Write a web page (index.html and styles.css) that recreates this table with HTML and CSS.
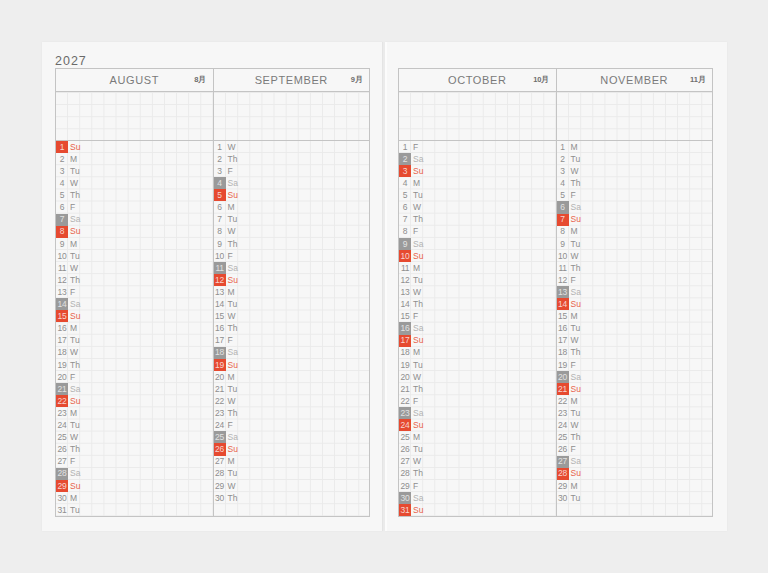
FILE: index.html
```html
<!DOCTYPE html>
<html lang="en">
<head>
<meta charset="utf-8">
<title>2027 Planner</title>
<link rel="stylesheet" href="styles.css">
</head>
<body>
<div class="spread">
  <section class="page page-left">
    <div class="year">2027</div>
    <div class="table">
      <div class="month">
        <div class="mhead"><span></span><span class="mname">AUGUST</span><span class="mnum">8月</span></div>
        <div class="notes"></div>
        <div class="days">
          <div class="d sun"><b>1</b><i>Su</i></div>
          <div class="d"><b>2</b><i>M</i></div>
          <div class="d"><b>3</b><i>Tu</i></div>
          <div class="d"><b>4</b><i>W</i></div>
          <div class="d"><b>5</b><i>Th</i></div>
          <div class="d"><b>6</b><i>F</i></div>
          <div class="d sat"><b>7</b><i>Sa</i></div>
          <div class="d sun"><b>8</b><i>Su</i></div>
          <div class="d"><b>9</b><i>M</i></div>
          <div class="d"><b>10</b><i>Tu</i></div>
          <div class="d"><b>11</b><i>W</i></div>
          <div class="d"><b>12</b><i>Th</i></div>
          <div class="d"><b>13</b><i>F</i></div>
          <div class="d sat"><b>14</b><i>Sa</i></div>
          <div class="d sun"><b>15</b><i>Su</i></div>
          <div class="d"><b>16</b><i>M</i></div>
          <div class="d"><b>17</b><i>Tu</i></div>
          <div class="d"><b>18</b><i>W</i></div>
          <div class="d"><b>19</b><i>Th</i></div>
          <div class="d"><b>20</b><i>F</i></div>
          <div class="d sat"><b>21</b><i>Sa</i></div>
          <div class="d sun"><b>22</b><i>Su</i></div>
          <div class="d"><b>23</b><i>M</i></div>
          <div class="d"><b>24</b><i>Tu</i></div>
          <div class="d"><b>25</b><i>W</i></div>
          <div class="d"><b>26</b><i>Th</i></div>
          <div class="d"><b>27</b><i>F</i></div>
          <div class="d sat"><b>28</b><i>Sa</i></div>
          <div class="d sun"><b>29</b><i>Su</i></div>
          <div class="d"><b>30</b><i>M</i></div>
          <div class="d"><b>31</b><i>Tu</i></div>
        </div>
      </div>
      <div class="month">
        <div class="mhead"><span></span><span class="mname">SEPTEMBER</span><span class="mnum">9月</span></div>
        <div class="notes"></div>
        <div class="days">
          <div class="d"><b>1</b><i>W</i></div>
          <div class="d"><b>2</b><i>Th</i></div>
          <div class="d"><b>3</b><i>F</i></div>
          <div class="d sat"><b>4</b><i>Sa</i></div>
          <div class="d sun"><b>5</b><i>Su</i></div>
          <div class="d"><b>6</b><i>M</i></div>
          <div class="d"><b>7</b><i>Tu</i></div>
          <div class="d"><b>8</b><i>W</i></div>
          <div class="d"><b>9</b><i>Th</i></div>
          <div class="d"><b>10</b><i>F</i></div>
          <div class="d sat"><b>11</b><i>Sa</i></div>
          <div class="d sun"><b>12</b><i>Su</i></div>
          <div class="d"><b>13</b><i>M</i></div>
          <div class="d"><b>14</b><i>Tu</i></div>
          <div class="d"><b>15</b><i>W</i></div>
          <div class="d"><b>16</b><i>Th</i></div>
          <div class="d"><b>17</b><i>F</i></div>
          <div class="d sat"><b>18</b><i>Sa</i></div>
          <div class="d sun"><b>19</b><i>Su</i></div>
          <div class="d"><b>20</b><i>M</i></div>
          <div class="d"><b>21</b><i>Tu</i></div>
          <div class="d"><b>22</b><i>W</i></div>
          <div class="d"><b>23</b><i>Th</i></div>
          <div class="d"><b>24</b><i>F</i></div>
          <div class="d sat"><b>25</b><i>Sa</i></div>
          <div class="d sun"><b>26</b><i>Su</i></div>
          <div class="d"><b>27</b><i>M</i></div>
          <div class="d"><b>28</b><i>Tu</i></div>
          <div class="d"><b>29</b><i>W</i></div>
          <div class="d"><b>30</b><i>Th</i></div>
          <div class="d"></div>
        </div>
      </div>
    </div>
  </section>
  <section class="page page-right">
    <div class="table">
      <div class="month">
        <div class="mhead"><span></span><span class="mname">OCTOBER</span><span class="mnum">10月</span></div>
        <div class="notes"></div>
        <div class="days">
          <div class="d"><b>1</b><i>F</i></div>
          <div class="d sat"><b>2</b><i>Sa</i></div>
          <div class="d sun"><b>3</b><i>Su</i></div>
          <div class="d"><b>4</b><i>M</i></div>
          <div class="d"><b>5</b><i>Tu</i></div>
          <div class="d"><b>6</b><i>W</i></div>
          <div class="d"><b>7</b><i>Th</i></div>
          <div class="d"><b>8</b><i>F</i></div>
          <div class="d sat"><b>9</b><i>Sa</i></div>
          <div class="d sun"><b>10</b><i>Su</i></div>
          <div class="d"><b>11</b><i>M</i></div>
          <div class="d"><b>12</b><i>Tu</i></div>
          <div class="d"><b>13</b><i>W</i></div>
          <div class="d"><b>14</b><i>Th</i></div>
          <div class="d"><b>15</b><i>F</i></div>
          <div class="d sat"><b>16</b><i>Sa</i></div>
          <div class="d sun"><b>17</b><i>Su</i></div>
          <div class="d"><b>18</b><i>M</i></div>
          <div class="d"><b>19</b><i>Tu</i></div>
          <div class="d"><b>20</b><i>W</i></div>
          <div class="d"><b>21</b><i>Th</i></div>
          <div class="d"><b>22</b><i>F</i></div>
          <div class="d sat"><b>23</b><i>Sa</i></div>
          <div class="d sun"><b>24</b><i>Su</i></div>
          <div class="d"><b>25</b><i>M</i></div>
          <div class="d"><b>26</b><i>Tu</i></div>
          <div class="d"><b>27</b><i>W</i></div>
          <div class="d"><b>28</b><i>Th</i></div>
          <div class="d"><b>29</b><i>F</i></div>
          <div class="d sat"><b>30</b><i>Sa</i></div>
          <div class="d sun"><b>31</b><i>Su</i></div>
        </div>
      </div>
      <div class="month">
        <div class="mhead"><span></span><span class="mname">NOVEMBER</span><span class="mnum">11月</span></div>
        <div class="notes"></div>
        <div class="days">
          <div class="d"><b>1</b><i>M</i></div>
          <div class="d"><b>2</b><i>Tu</i></div>
          <div class="d"><b>3</b><i>W</i></div>
          <div class="d"><b>4</b><i>Th</i></div>
          <div class="d"><b>5</b><i>F</i></div>
          <div class="d sat"><b>6</b><i>Sa</i></div>
          <div class="d sun"><b>7</b><i>Su</i></div>
          <div class="d"><b>8</b><i>M</i></div>
          <div class="d"><b>9</b><i>Tu</i></div>
          <div class="d"><b>10</b><i>W</i></div>
          <div class="d"><b>11</b><i>Th</i></div>
          <div class="d"><b>12</b><i>F</i></div>
          <div class="d sat"><b>13</b><i>Sa</i></div>
          <div class="d sun"><b>14</b><i>Su</i></div>
          <div class="d"><b>15</b><i>M</i></div>
          <div class="d"><b>16</b><i>Tu</i></div>
          <div class="d"><b>17</b><i>W</i></div>
          <div class="d"><b>18</b><i>Th</i></div>
          <div class="d"><b>19</b><i>F</i></div>
          <div class="d sat"><b>20</b><i>Sa</i></div>
          <div class="d sun"><b>21</b><i>Su</i></div>
          <div class="d"><b>22</b><i>M</i></div>
          <div class="d"><b>23</b><i>Tu</i></div>
          <div class="d"><b>24</b><i>W</i></div>
          <div class="d"><b>25</b><i>Th</i></div>
          <div class="d"><b>26</b><i>F</i></div>
          <div class="d sat"><b>27</b><i>Sa</i></div>
          <div class="d sun"><b>28</b><i>Su</i></div>
          <div class="d"><b>29</b><i>M</i></div>
          <div class="d"><b>30</b><i>Tu</i></div>
          <div class="d"></div>
        </div>
      </div>
    </div>
  </section>
</div>
</body>
</html>
```

FILE: styles.css
```css
:root {
  --u: 12.115px;
  --line: #c4c4c4;
  --grid: #eaeaea;
  --red: #e64a30;
  --gray: #9a9a9a;
}

* { box-sizing: border-box; }

html, body {
  margin: 0;
  padding: 0;
  background: #eeeeee;
  width: 768px;
  height: 573px;
  overflow: hidden;
  font-family: "Liberation Sans", Arial, sans-serif;
}

.spread {
  display: flex;
  gap: 2px;
  padding: 42px 0 0 42px;
}

.page {
  width: 341px;
  height: 489px;
  background: #f7f7f7;
  box-shadow: 0 0 2px rgba(0, 0, 0, 0.04);
}

.page-left {
  padding: 12px 13px 0 13px;
  border-right: 1px solid #e4e4e4;
}

.page-right {
  width: 342px;
  padding: 26px 14px 0 11px;
  border-left: 2px solid #fcfcfc;
}

.year {
  height: 14px;
  font-size: 12.5px;
  line-height: 14px;
  letter-spacing: 1px;
  color: #6a6a6a;
}

.table {
  width: 315px;
  height: 449px;
  display: grid;
  grid-template-columns: 1fr 1fr;
  border: 1px solid var(--line);
}

.month {
  display: grid;
  grid-template-rows: 23px 48px 1fr;
  min-width: 0;
}

.month + .month {
  border-left: 1px solid var(--line);
}

.mhead {
  display: grid;
  grid-template-columns: 1fr auto 1fr;
  align-items: center;
  border-bottom: 1px solid var(--line);
  padding: 0 6px 0 6px;
}

.mname {
  font-size: 11px;
  letter-spacing: 0.6px;
  color: #7a7a7a;
}

.mnum {
  justify-self: end;
  font-size: 7.5px;
  font-weight: bold;
  color: #6e6e6e;
}

.notes,
.days {
  background-image:
    linear-gradient(to right, var(--grid) 1px, transparent 1px),
    linear-gradient(to bottom, var(--grid) 1px, transparent 1px);
  background-size: var(--u) var(--u);
  background-position: -1px 0, 0 0;
}

.days {
  border-top: 1px solid var(--line);
  display: grid;
  grid-template-rows: repeat(31, 1fr);
  background-position: -1px -1px, 0 -1px;
}

.d {
  display: flex;
  align-items: stretch;
  font-size: 8.5px;
  color: #8e8e8e;
  line-height: 1;
}

.d b {
  width: 12px;
  font-weight: normal;
  display: flex;
  align-items: center;
  justify-content: center;
  letter-spacing: -0.3px;
}

.d i {
  font-style: normal;
  display: flex;
  align-items: center;
  padding-left: 2px;
}

.d.sat b {
  background: var(--gray);
  color: #e2e2e2;
}

.d.sat i {
  color: #b2b2b2;
}

.d.sun b {
  background: var(--red);
  color: #f6d6d0;
}

.d.sun i {
  color: #e8644b;
}
```
